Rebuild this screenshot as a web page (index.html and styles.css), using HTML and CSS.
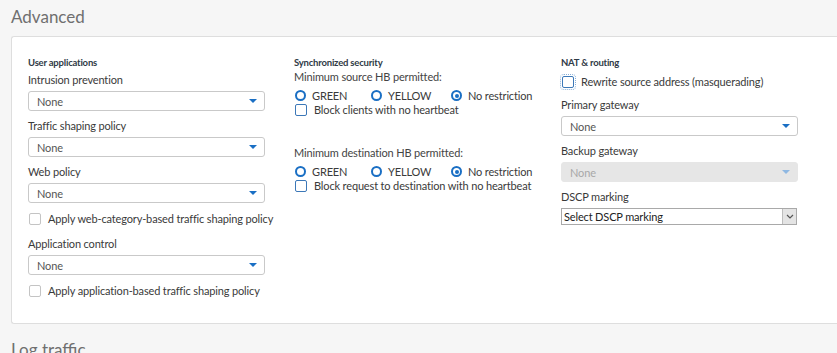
FILE: index.html
```html
<!DOCTYPE html>
<html lang="en">
<head>
    <meta charset="UTF-8">
    <title>Advanced</title>
    <link rel="stylesheet" href="styles.css">
</head>
<body>
    <h2 class="section-title">Advanced</h2>
    <div class="panel">
        <div class="col">
            <div class="group-title">User applications</div>
            <label class="field-label">Intrusion prevention</label>
            <div class="dropdown"><span>None</span><i class="caret"></i></div>
            <label class="field-label">Traffic shaping policy</label>
            <div class="dropdown"><span>None</span><i class="caret"></i></div>
            <label class="field-label">Web policy</label>
            <div class="dropdown"><span>None</span><i class="caret"></i></div>
            <div class="check-row grey"><span class="box"></span>Apply web-category-based traffic shaping policy</div>
            <label class="field-label">Application control</label>
            <div class="dropdown"><span>None</span><i class="caret"></i></div>
            <div class="check-row grey"><span class="box"></span>Apply application-based traffic shaping policy</div>
        </div>

        <div class="col">
            <div class="group-title">Synchronized security</div>
            <div class="sub-label">Minimum source HB permitted:</div>
            <div class="radio-row">
                <span class="radio"><i class="dot"></i>GREEN</span>
                <span class="radio"><i class="dot"></i>YELLOW</span>
                <span class="radio on"><i class="dot"></i>No restriction</span>
            </div>
            <div class="check-row blue"><span class="box"></span>Block clients with no heartbeat</div>

            <div class="sub-label spaced">Minimum destination HB permitted:</div>
            <div class="radio-row">
                <span class="radio"><i class="dot"></i>GREEN</span>
                <span class="radio"><i class="dot"></i>YELLOW</span>
                <span class="radio on"><i class="dot"></i>No restriction</span>
            </div>
            <div class="check-row blue"><span class="box"></span>Block request to destination with no heartbeat</div>
        </div>

        <div class="col">
            <div class="group-title">NAT &amp; routing</div>
            <div class="check-row blue focus"><span class="box"></span>Rewrite source address (masquerading)</div>
            <label class="field-label">Primary gateway</label>
            <div class="dropdown"><span>None</span><i class="caret"></i></div>
            <label class="field-label">Backup gateway</label>
            <div class="dropdown disabled"><span>None</span><i class="caret"></i></div>
            <label class="field-label">DSCP marking</label>
            <div class="native-select"><span>Select DSCP marking</span><b class="native-btn"><svg width="8" height="5" viewBox="0 0 8 5"><path d="M1 1 L4 4 L7 1" fill="none" stroke="#555" stroke-width="1.2"/></svg></b></div>
        </div>
    </div>
    <h2 class="section-title next">Log traffic</h2>
</body>
</html>
```

FILE: styles.css
```css
body {
    margin: 0;
    padding: 0 0 0 11px;
    background: #f6f6f6;
    font-family: 'Lato', sans-serif;
    font-size: 11px;
    letter-spacing: -0.15px;
    color: #333;
    overflow: hidden;
}
.section-title {
    margin: 0;
    padding-top: 5px;
    height: 31px;
    font-size: 17px;
    font-weight: 400;
    letter-spacing: 0;
    color: #6f6f6f;
    line-height: 24px;
}
.section-title.next {
    padding-top: 14px;
    height: 20px;
    overflow: visible;
}
.panel {
    display: grid;
    grid-template-columns: 266px 267px 1fr;
    background: #fff;
    border: 1px solid #dedede;
    border-right: none;
    border-radius: 3px 0 0 3px;
    padding: 19px 0 22px 16px;
    height: 245px;
}
.col {
    display: flex;
    flex-direction: column;
    align-items: flex-start;
    white-space: nowrap;
}
.group-title {
    font-size: 9.5px;
    font-weight: 700;
    color: #2f3a46;
    line-height: 14px;
    letter-spacing: -0.2px;
}
.field-label {
    line-height: 16px;
    color: #3a3a3a;
    margin-top: 7px;
    margin-bottom: 3px;
}
.group-title + .field-label {
    margin-top: 2px;
}
.dropdown {
    box-sizing: border-box;
    width: 237px;
    height: 20px;
    border: 1px solid #c9c9c9;
    border-radius: 3px;
    background: #fff;
    display: flex;
    align-items: center;
    justify-content: space-between;
    padding: 0 7px 0 8px;
    color: #555;
}
.dropdown.disabled {
    background: #e6e6e6;
    border-color: #e6e6e6;
    color: #a8a8a8;
}
.caret {
    width: 0;
    height: 0;
    border-left: 4px solid transparent;
    border-right: 4px solid transparent;
    border-top: 4px solid #1a6fc4;
}
.disabled .caret {
    border-top-color: #8fb8e2;
}
.check-row {
    display: flex;
    align-items: center;
    line-height: 16px;
    margin-top: 8px;
    color: #3a3a3a;
}
.col > .check-row + .field-label {
    margin-top: 9px;
}
.check-row .box {
    flex: none;
    box-sizing: border-box;
    width: 12px;
    height: 12px;
    border: 1px solid #c4c4c4;
    border-radius: 2px;
    margin: 0 7px 0 1px;
    background: #fff;
}
.check-row.blue .box {
    border-color: #3c78b8;
}
.check-row.blue {
    margin-top: 0;
    line-height: 14px;
}
.check-row.focus {
    margin-top: 4px;
    line-height: 16px;
}
.check-row.focus + .field-label {
    margin-top: 7px;
}
.check-row.focus .box {
    outline: 1px dotted #8ab0d8;
    outline-offset: 1px;
}
.sub-label {
    line-height: 14px;
    color: #444;
    margin-bottom: 4px;
}
.sub-label.spaced {
    margin-top: 29px;
}
.radio-row {
    display: flex;
    line-height: 15px;
}
.radio {
    flex: none;
    display: flex;
    align-items: center;
    width: 76px;
    color: #3a3a3a;
}
.radio:nth-child(2) {
    width: 80px;
}
.radio:nth-child(3) {
    width: auto;
}
.radio .dot {
    flex: none;
    box-sizing: border-box;
    width: 11px;
    height: 11px;
    border: 2px solid #1a6fc4;
    border-radius: 50%;
    margin: 0 6px 0 1px;
    position: relative;
}
.radio.on .dot::after {
    content: '';
    position: absolute;
    left: 1.5px;
    top: 1.5px;
    width: 4px;
    height: 4px;
    border-radius: 50%;
    background: #1a6fc4;
}
.native-select {
    box-sizing: border-box;
    width: 236px;
    height: 17px;
    border: 1px solid #a9a9a9;
    display: flex;
    align-items: center;
    justify-content: space-between;
    padding-left: 2px;
    color: #222;
    background: #fff;
}
.native-btn {
    box-sizing: border-box;
    width: 14px;
    height: 15px;
    background: #e4e4e4;
    border-left: 1px solid #bdbdbd;
    display: flex;
    align-items: center;
    justify-content: center;
}
```
